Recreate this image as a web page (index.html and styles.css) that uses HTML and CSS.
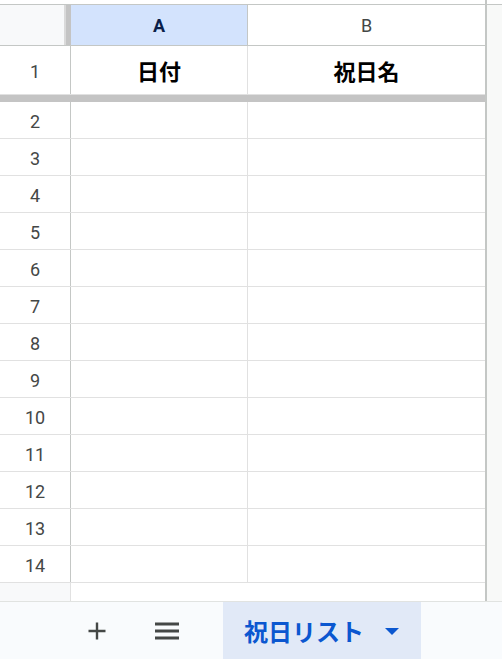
FILE: index.html
```html
<!DOCTYPE html>
<html lang="ja">
<head>
<meta charset="utf-8">
<link rel="stylesheet" href="styles.css">
</head>
<body>
<div class="app">
  <div class="grid-area">
    <div class="sheet">
      <div class="top-strip"></div>
      <div class="row head-row">
        <div class="rh corner"><span class="handle"></span></div>
        <div class="cell col-a colhead selected">A</div>
        <div class="cell col-b colhead">B</div>
      </div>
      <div class="row row1">
        <div class="rh">1</div>
        <div class="cell col-a title">日付</div>
        <div class="cell col-b title">祝日名</div>
      </div>
      <div class="freeze"></div>
      <div class="row"><div class="rh">2</div><div class="cell col-a"></div><div class="cell col-b"></div></div>
      <div class="row"><div class="rh">3</div><div class="cell col-a"></div><div class="cell col-b"></div></div>
      <div class="row"><div class="rh">4</div><div class="cell col-a"></div><div class="cell col-b"></div></div>
      <div class="row"><div class="rh">5</div><div class="cell col-a"></div><div class="cell col-b"></div></div>
      <div class="row"><div class="rh">6</div><div class="cell col-a"></div><div class="cell col-b"></div></div>
      <div class="row"><div class="rh">7</div><div class="cell col-a"></div><div class="cell col-b"></div></div>
      <div class="row"><div class="rh">8</div><div class="cell col-a"></div><div class="cell col-b"></div></div>
      <div class="row"><div class="rh">9</div><div class="cell col-a"></div><div class="cell col-b"></div></div>
      <div class="row"><div class="rh">10</div><div class="cell col-a"></div><div class="cell col-b"></div></div>
      <div class="row"><div class="rh">11</div><div class="cell col-a"></div><div class="cell col-b"></div></div>
      <div class="row"><div class="rh">12</div><div class="cell col-a"></div><div class="cell col-b"></div></div>
      <div class="row"><div class="rh">13</div><div class="cell col-a"></div><div class="cell col-b"></div></div>
      <div class="row"><div class="rh">14</div><div class="cell col-a"></div><div class="cell col-b"></div></div>
      <div class="row filler"><div class="rh"></div><div class="fill-rest"></div></div>
    </div>
    <div class="vscroll"></div>
  </div>
  <div class="tabbar">
    <button class="icon-btn plus" aria-label="シートを追加">
      <svg width="20" height="20" viewBox="0 0 20 20"><path d="M10 1.5v17M1.5 10h17" stroke="#444746" stroke-width="2.4" fill="none"/></svg>
    </button>
    <button class="icon-btn menu" aria-label="すべてのシート">
      <svg width="26" height="20" viewBox="0 0 26 20"><path d="M1 3h24M1 10h24M1 17h24" stroke="#444746" stroke-width="2.8" fill="none"/></svg>
    </button>
    <div class="tab active">
      <span class="tab-name">祝日リスト</span>
      <svg class="caret" width="14" height="7" viewBox="0 0 14 7"><path d="M0 0h14L7 7z" fill="#0b57d0"/></svg>
    </div>
  </div>
</div>
</body>
</html>
```

FILE: styles.css
```css
* { box-sizing: border-box; }
html, body {
  margin: 0;
  padding: 0;
  background: #ffffff;
}
body {
  width: 502px;
  height: 659px;
  overflow: hidden;
  font-family: Roboto, "Noto Sans CJK JP", sans-serif;
}
.app {
  display: flex;
  flex-direction: column;
  height: 659px;
}
.grid-area {
  display: flex;
  flex: 0 0 602px;
  border-bottom: 1px solid #e1e3e1;
}
.sheet {
  width: 487px;
  display: flex;
  flex-direction: column;
  border-right: 2px solid #c4c7c5;
}
.vscroll {
  flex: 1;
  background: #f8f9f8;
  margin-top: 4px;
  border-top: 1px solid #c4c7c5;
}
.top-strip {
  height: 5px;
  border-bottom: 1px solid #c4c7c5;
  background: #fff;
}
.row {
  display: flex;
  height: 37px;
  flex: 0 0 37px;
  border-bottom: 1px solid #e1e1e1;
}
.rh {
  width: 71px;
  flex: 0 0 71px;
  border-right: 1px solid #c4c7c5;
  display: flex;
  align-items: center;
  justify-content: center;
  font-size: 18px;
  color: #444746;
  background: #fff;
  padding-top: 2px;
}
.cell {
  display: flex;
  align-items: center;
  justify-content: center;
  background: #fff;
}
.col-a {
  width: 177px;
  flex: 0 0 177px;
  border-right: 1px solid #e1e1e1;
}
.col-b {
  flex: 1;
}
.head-row {
  height: 41px;
  flex: 0 0 41px;
  border-bottom: 1px solid #c4c7c5;
}
.corner {
  background: #f8f9fa;
  position: relative;
  border-right: none;
}
.handle {
  position: absolute;
  top: 0;
  bottom: 0;
  left: 64px;
  width: 7px;
  background: #c4c4c4;
  border-left: 2px solid #dadada;
}
.colhead {
  font-size: 18px;
  color: #444746;
  padding-top: 1px;
}
.colhead.col-a {
  border-right: 1px solid #c4c7c5;
}
.colhead.selected {
  background: #d3e3fd;
  color: #0b1f4a;
  font-weight: 700;
}
.row1 {
  height: 49px;
  flex: 0 0 49px;
  border-bottom: 1px solid #e1e1e1;
}
.title {
  font-family: "Noto Sans CJK JP", sans-serif;
  font-weight: 700;
  font-size: 22px;
  color: #000;
}
.freeze {
  height: 7px;
  flex: 0 0 7px;
  background: #c4c4c4;
}
.filler {
  flex: 1 1 auto;
  height: auto;
  border-bottom: none;
}
.filler .rh {
  background: #f8f9fa;
  border-right: 1px solid #e1e1e1;
}
.fill-rest {
  flex: 1;
  background: #fff;
}
.tabbar {
  flex: 1;
  display: flex;
  align-items: stretch;
  background: #f9fbfd;
  padding-left: 87px;
}
.icon-btn {
  border: none;
  background: transparent;
  padding: 0;
  display: flex;
  align-items: center;
  justify-content: center;
}
.plus {
  width: 20px;
}
.menu {
  width: 26px;
  margin-left: 47px;
}
.tab {
  margin-left: 43px;
  width: 198px;
  background: #e1e9f7;
  display: flex;
  align-items: center;
  padding-left: 21px;
}
.tab-name {
  font-family: "Noto Sans CJK JP", sans-serif;
  font-weight: 700;
  font-size: 24px;
  color: #0b57d0;
}
.caret {
  margin-left: 21px;
  margin-top: 2px;
}
```
